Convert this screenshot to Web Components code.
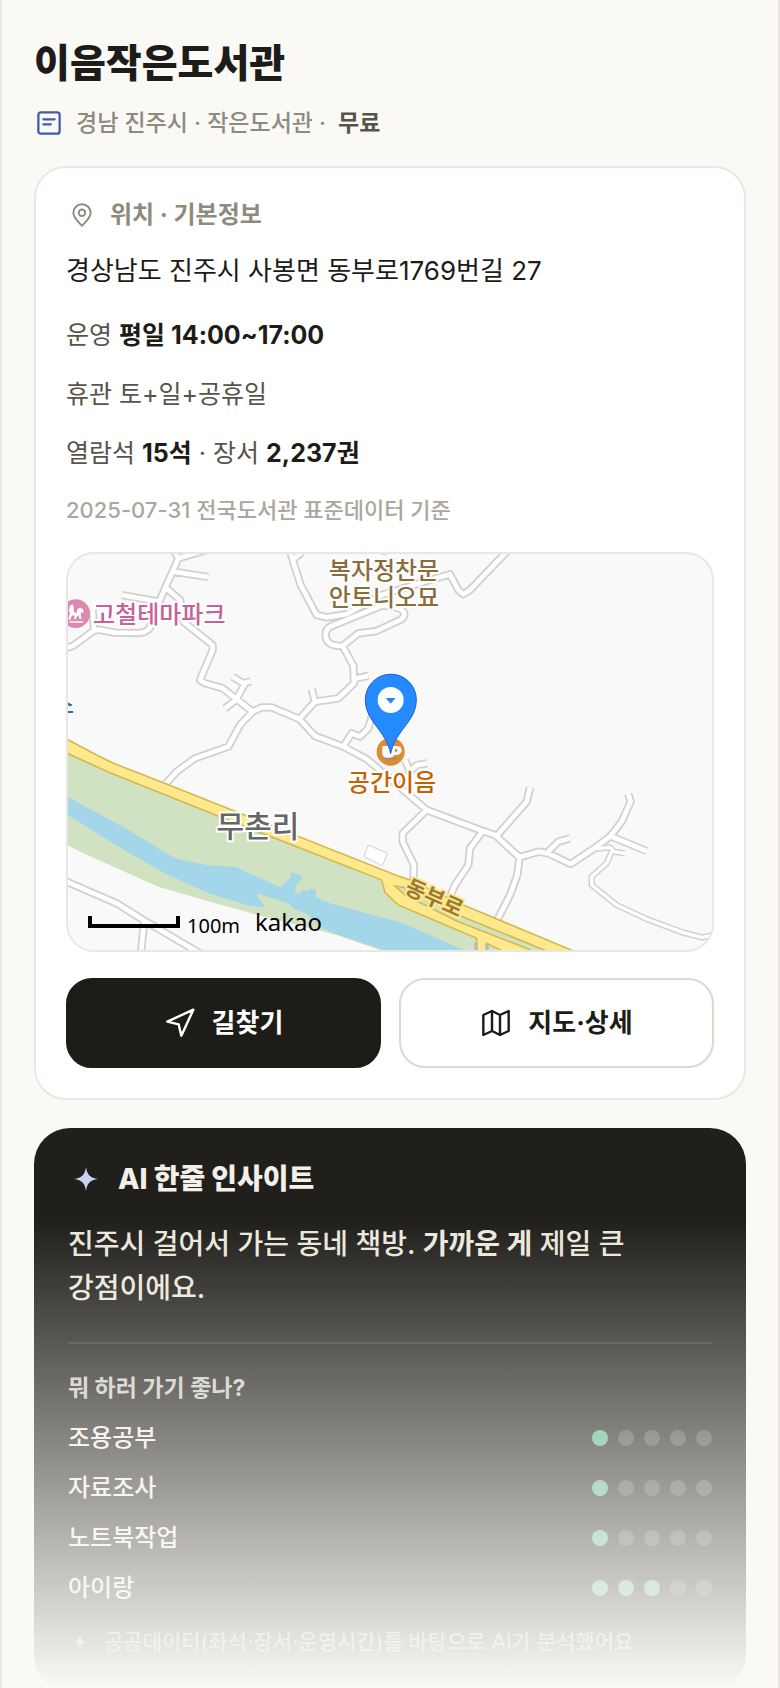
<!DOCTYPE html>
<html lang="ko">
<head>
<meta charset="utf-8">
<meta name="viewport" content="width=device-width, initial-scale=1">
<title>이음작은도서관</title>
<style>
    body {
        margin: 0;
        background: #faf9f5;
        color: #1d1c18;
        font-family: Inter, "Noto Sans CJK KR", sans-serif;
        font-weight: 500;
        word-break: keep-all;
    }
</style>
</head>
<body>

<library-page>
    <place-header slot="header" name="이음작은도서관" price="무료">경남 진주시 · 작은도서관 ·</place-header>

    <info-card>
        <span slot="title">위치 · 기본정보</span>
        <span slot="address">경상남도 진주시 사봉면 동부로1769번길 27</span>
        <info-line>운영 <b>평일 14:00~17:00</b></info-line>
        <info-line>휴관 토+일+공휴일</info-line>
        <info-line>열람석 <b>15석</b> · 장서 <b>2,237권</b></info-line>
        <info-line source>2025-07-31 전국도서관 표준데이터 기준</info-line>
        <area-map slot="map"></area-map>
        <action-button slot="actions" icon="send" primary>길찾기</action-button>
        <action-button slot="actions" icon="map">지도·상세</action-button>
    </info-card>

    <insight-card>
        <span slot="title">AI 한줄 인사이트</span>
        <span slot="summary">진주시 걸어서 가는 동네 책방. <b>가까운 게</b> 제일 큰 강점이에요.</span>
        <span slot="question">뭐 하러 가기 좋나?</span>
        <purpose-row score="1">조용공부</purpose-row>
        <purpose-row score="1">자료조사</purpose-row>
        <purpose-row score="1">노트북작업</purpose-row>
        <purpose-row score="3">아이랑</purpose-row>
        <span slot="note">공공데이터(좌석·장서·운영시간)를 바탕으로 AI가 분석했어요</span>
    </insight-card>
</library-page>

<script>
const ICONS = {
    note: '<rect x="3.5" y="3.5" width="17" height="17" rx="2"/><path d="M7.5 9h9M7.5 13h6"/>',
    pin: '<path d="M12 22C10 19.500 4 15 4 10a8 8 0 0 1 16 0c0 5-6 9.500-8 12z"/><circle cx="12" cy="10" r="3"/>',
    send: '<path d="M22 2 13 21.500 11 13 2.500 11z"/>',
    map: '<path d="M2.500 6 9 3l6 3 6.500-3v15L15 21l-6-3-6.500 3zM9 3v15M15 6v15"/>',
    spark: '<path fill="currentColor" stroke="none" d="M12 0c1.200 8 4 10.800 12 12-8 1.200-10.800 4-12 12-1.200-8-4-10.800-12-12 8-1.200 10.800-4 12-12z"/>'
};

function attach(element, html) {
    element.attachShadow({mode: "open"}).innerHTML = html;
}

class UiIcon extends HTMLElement {
    connectedCallback() {
        if (this.shadowRoot) return;
        attach(this, `
            <style>
            :host {
                display: flex;
                flex: none;
            }
            svg {
                width: 100%;
                height: 100%;
                fill: none;
                stroke: currentColor;
                stroke-width: 1.8;
                stroke-linecap: round;
                stroke-linejoin: round;
            }
            </style>
            <svg viewBox="0 0 24 24" aria-hidden="true">${ICONS[this.getAttribute("name")]}</svg>`);
    }
}

class LibraryPage extends HTMLElement {
    constructor() {
        super();
        attach(this, `
            <style>
            :host {
                display: block;
                position: relative;
                box-sizing: border-box;
                height: 100vh;
                overflow: hidden;
                padding: 39px 32px 0;
                border: solid #eae8e1;
                border-width: 0 2px;
            }
            main {
                display: flex;
                flex-direction: column;
                gap: 28px;
                margin-top: 27px;
            }
            /* fades the rest of the preview into the page */
            .fade {
                position: absolute;
                inset: auto -2px 0;
                height: 468px;
                background: linear-gradient(#faf9f500, #faf9f5);
                pointer-events: none;
            }
            </style>
            <slot name="header"></slot>
            <main><slot></slot></main>
            <div class="fade"></div>`);
    }
}

class PlaceHeader extends HTMLElement {
    connectedCallback() {
        if (this.shadowRoot) return;
        attach(this, `
            <style>
            :host {
                display: block;
            }
            h1 {
                margin: 0;
                font-size: 39px;
                line-height: 48px;
                font-weight: 800;
            }
            p {
                display: flex;
                align-items: center;
                gap: 12px;
                margin: 20px 0 0;
                font-size: 23px;
                line-height: 32px;
                color: #8e8a80;
            }
            ui-icon {
                width: 30px;
                height: 30px;
                color: #3f5bb0;
            }
            b {
                font-weight: 700;
                color: #57544c;
            }
            </style>
            <h1>${this.getAttribute("name")}</h1>
            <p><ui-icon name="note"></ui-icon><slot></slot><b>${this.getAttribute("price")}</b></p>`);
    }
}

class InfoCard extends HTMLElement {
    constructor() {
        super();
        attach(this, `
            <style>
            :host {
                display: block;
                padding: 30px;
                border: 2px solid #eae8e1;
                border-radius: 32px;
                background: #fff;
            }
            h2 {
                display: flex;
                align-items: center;
                gap: 12px;
                margin: 0;
                font-size: 24px;
                line-height: 34px;
                font-weight: 700;
                color: #8e8a80;
            }
            ui-icon {
                width: 32px;
                height: 26px;
            }
            .address {
                margin: 19px 0 24px;
                font-size: 26px;
                line-height: 40px;
                font-weight: 400;
            }
            .lines {
                display: flex;
                flex-direction: column;
                gap: 19px;
            }
            .map {
                margin: 24px 0 26px;
            }
            .actions {
                display: flex;
                gap: 18px;
            }
            </style>
            <h2><ui-icon name="pin"></ui-icon><slot name="title"></slot></h2>
            <p class="address"><slot name="address"></slot></p>
            <div class="lines"><slot></slot></div>
            <div class="map"><slot name="map"></slot></div>
            <div class="actions"><slot name="actions"></slot></div>`);
    }
}

class InfoLine extends HTMLElement {
    constructor() {
        super();
        attach(this, `
            <style>
            :host {
                display: block;
                font-size: 25px;
                line-height: 40px;
                font-weight: 400;
                color: #57544c;
            }
            :host([source]) {
                font-size: 22px;
                line-height: 36px;
                font-weight: 500;
                color: #aba79c;
            }
            ::slotted(b) {
                font-weight: 700;
                color: #1d1c18;
            }
            </style>
            <slot></slot>`);
    }
}

// centre lines of the side roads, drawn twice: grey casing, then white core
const ROADS = `
    M340 15 355 40 340 75 315 130 298 170 275 235Q270 262 235 264L165 263 115 254 100 258 40 302 15 310
    M355 40 440 15 M340 80 445 96 M185 150 295 170 M98 195 102 255
    M318 128 360 165 370 230 458 300 458 315 420 405 435 415 488 430 578 500
    M528 465 558 410 M518 395 550 415 572 409 M528 465 495 490
    M578 500 605 487 635 487 718 522 765 573 850 605 920 642 965 680 1100 795
    M578 500 540 540 505 605 405 640 350 680 318 715
    M718 522 765 470 835 460 882 415 880 362 848 303Q797 305 797 270Q797 250 815 243L965 182Q1035 185 1033 210Q1030 220 1020 225L950 258 895 265 848 303
    M882 402 925 392 M765 470 755 432
    M690 15 698 45 722 120 770 210 800 217 860 207 965 150 1110 105 1170 88 1195 135 1210 148 1230 135 1345 15 M698 45 725 22
    M850 605 875 565 900 575 925 550 938 505
    M1102 655 1070 660 1050 680 1035 645 M1050 680 1030 715
    M1100 795 1260 855 1305 870 1378 937 1435 920 1465 925 1532 957 1600 912 1650 875 1685 830 1712 770 1705 747
    M1650 873 1760 918 M1465 920 1495 890 1530 880 M1310 873 1400 770 1410 728
    M1100 795 1028 865 1028 890 1062 960 1060 1005
    M1265 863 1230 910 1225 960 1185 1020 1170 1055
    M1378 940 1372 990 1350 1050 1312 1125
    M15 1008 170 1075 250 1125 420 1225 M252 1130 243 1225`;
const LANES = `
    M1595 912 1650 907 1662 920 1695 925
    M1655 920 1640 955 1595 995 1595 1020 1670 1080 1760 1122 1870 1163 1925 1177 1965 1170`;

class AreaMap extends HTMLElement {
    constructor() {
        super();
        attach(this, `
            <style>
            :host {
                display: block;
                overflow: hidden;
                border: 2px solid #eae7e1;
                border-radius: 28px;
                background: #f9f9f9;
            }
            svg {
                display: block;
                width: 100%;
            }
            .casing {
                fill: none;
                stroke: #d1d1d1;
                stroke-width: 25;
            }
            .core {
                fill: none;
                stroke: #fff;
                stroke-width: 14;
            }
            .lane.casing {
                stroke-width: 19;
            }
            .lane.core {
                stroke-width: 10;
            }
            text {
                font-size: 24px;
                font-weight: 500;
                paint-order: stroke;
                stroke: #fff;
                stroke-width: 4px;
                stroke-linejoin: round;
            }
            .road {
                font-size: 22px;
                font-weight: 700;
                fill: #9c7a35;
                stroke: #ffe98c;
            }
            .village {
                font-size: 30px;
                fill: #666;
            }
            .distance, .brand {
                font-family: "Noto Sans", sans-serif;
                font-weight: 400;
                stroke: none;
            }
            .distance {
                font-size: 20px;
            }
            </style>
            <svg viewBox="0 0 644 396" role="img" aria-label="공간이음 주변 지도">
                <g transform="translate(-8 -9) scale(.33333)">
                    <path fill="#d1e2c2" d="M15 617 150 680 480 815 960 1005 1010 1080 1250 1180 1460 1230 980 1222 830 1170 600 1112 450 1070 295 1025 60 920 15 897z"/>
                    <path fill="#a4d6ea" d="M15 750 85 790 190 845 345 940 440 960 530 967 660 1027 690 1000 693 980 708 987 725 993 727 1000 708 1020 705 1043 722 1045 725 1035 745 1037 755 1030 768 1037 768 1057 810 1075 1030 1135 1225 1222 975 1217 820 1165 790 1150 735 1105 700 1090 685 1075 590 1045 593 1055 615 1085 600 1087 560 1080 445 1045 315 985 200 920 15 805z"/>
                    <g stroke-linejoin="round">
                        <path class="casing" d="${ROADS}"/>
                        <path class="lane casing" d="${LANES}"/>
                        <path class="core" d="${ROADS}"/>
                        <path class="lane core" d="${LANES}"/>
                    </g>
                    <path fill="#fff" stroke="#d1d1d1" stroke-width="3" d="M925 900 983 925 967 962 912 935z"/>
                    <path fill="#ffe98c" stroke="#d2bb4e" stroke-width="5" d="M10 577 110 630 160 655 310 713 540 805 1020 995 1050 1005 1210 1080 1550 1222 1335 1222 1280 1195 1280 1225 1250 1225 1250 1180 1015 1080 975 1043 965 1005 480 815 150 683 10 620z"/>
                    <path fill="#d1e2c2" stroke="#d2bb4e" stroke-width="5" d="M1005 1023 1045 1030 1200 1112 1460 1218 1420 1218 1190 1128 1035 1050z"/>
                    <path stroke="#b9b9b9" stroke-width="10" d="M1248 1192V1222M1281 1195V1222"/>
                    <path fill="none" stroke="#000" stroke-width="12" d="M90 1113v30h264v-30"/>

                    <circle cx="47" cy="206" r="43" fill="#dd88b1"/>
                    <path fill="#fff" d="M28 190l3-9 7-3 3 7 1 17 8 2 2-12 8-4 8 4 3 10-3 3-4-5-2 9 3 13h-6l-4-11-5 4-2 7h-6l2-9-7-2-5 8 1 5h-7l1-11 3-9-4-7zM29 229h40v4H29z"/>
                    <circle cx="972" cy="-12" r="41" fill="#dcc3a0"/>
                    <circle cx="992" cy="620" r="42" fill="#dc8c36"/>
                    <path fill="#fff" d="M967 603h36q22-2 22 13t-22 14q-6 10-19 10t-17-13zm38 9v10q8-1 8-6t-8-4z"/>
                    <path fill="#888" d="M974 638h35v5h-35z"/>
                    <path fill="#238bff" stroke="#1b62c9" stroke-width="3" d="M992 626C978 555 916 530 916 464a76 76 0 0 1 153 0C1069 530 1006 555 992 626z"/>
                    <circle cx="992" cy="465" r="39" fill="#fff"/>
                    <path fill="#238bff" d="M977 459h30l-15 17z"/>
                </g>
                <text x="25" y="69" fill="#c8609a">고철테마파크</text>
                <text x="6" y="159" text-anchor="end" fill="#2b6f86">스</text>
                <text x="316" y="25" text-anchor="middle" fill="#8a6d3b">복자정찬문</text>
                <text x="316" y="52" text-anchor="middle" fill="#8a6d3b">안토니오묘</text>
                <text x="324" y="237" text-anchor="middle" fill="#c56200">공간이음</text>
                <text class="village" x="190" y="283" text-anchor="middle">무촌리</text>
                <text class="road" x="367" y="352" text-anchor="middle" transform="rotate(24 367 343)">동부로</text>
                <text class="distance" x="119" y="379">100m</text>
                <text class="brand" x="187" y="377">kakao</text>
            </svg>`);
    }
}

class ActionButton extends HTMLElement {
    connectedCallback() {
        if (this.shadowRoot) return;
        attach(this, `
            <style>
            :host {
                display: block;
                flex: 1;
            }
            button {
                display: flex;
                align-items: center;
                justify-content: center;
                gap: 16px;
                width: 100%;
                height: 90px;
                padding: 0;
                border: 2px solid #dcd9d0;
                border-radius: 26px;
                background: #fff;
                color: #1d1c18;
                font: inherit;
                font-size: 26px;
                line-height: 34px;
                font-weight: 700;
                cursor: pointer;
            }
            :host([primary]) button {
                border-color: #1d1c18;
                background: #1d1c18;
                color: #fff;
            }
            ui-icon {
                width: 32px;
                height: 32px;
            }
            </style>
            <button type="button"><ui-icon name="${this.getAttribute("icon")}"></ui-icon><slot></slot></button>`);
    }
}

class InsightCard extends HTMLElement {
    constructor() {
        super();
        attach(this, `
            <style>
            :host {
                display: block;
                padding: 34px;
                border-radius: 36px;
                background: #201f1b;
                color: #f3f0e9;
            }
            h2, h3, p {
                margin: 0;
            }
            h2 {
                display: flex;
                align-items: center;
                gap: 14px;
                font-size: 28px;
                line-height: 34px;
                font-weight: 800;
            }
            h2 ui-icon {
                width: 36px;
                height: 24px;
                color: #c6d2f0;
            }
            .summary {
                margin-top: 26px;
                padding-bottom: 32px;
                border-bottom: 2px solid #ffffff1a;
                font-size: 28px;
                line-height: 44px;
                color: #ebe7dd;
            }
            h3 {
                margin-top: 29px;
                font-size: 23px;
                line-height: 30px;
                font-weight: 700;
                color: #cdcac0;
            }
            .rows {
                display: flex;
                flex-direction: column;
                gap: 16px;
                margin-top: 18px;
            }
            .note {
                display: flex;
                align-items: center;
                gap: 12px;
                margin-top: 22px;
                font-size: 21px;
                line-height: 30px;
                color: #aaa79e;
            }
            .note ui-icon {
                width: 24px;
                height: 16px;
            }
            </style>
            <h2><ui-icon name="spark"></ui-icon><slot name="title"></slot></h2>
            <p class="summary"><slot name="summary"></slot></p>
            <h3><slot name="question"></slot></h3>
            <div class="rows"><slot></slot></div>
            <p class="note"><ui-icon name="spark"></ui-icon><slot name="note"></slot></p>`);
    }
}

class PurposeRow extends HTMLElement {
    connectedCallback() {
        if (this.shadowRoot) return;
        const score = Number(this.getAttribute("score"));
        let dots = "";
        for (let i = 0; i < 5; i++) {
            dots += `<i class="${i < score ? "on" : ""}"></i>`;
        }
        attach(this, `
            <style>
            :host {
                display: flex;
                align-items: center;
                justify-content: space-between;
                font-size: 24px;
                line-height: 34px;
                font-weight: 500;
            }
            .dots {
                display: flex;
                gap: 10px;
            }
            i {
                width: 16px;
                height: 16px;
                border-radius: 50%;
                background: #ffffff2e;
            }
            .on {
                background: #5bb78c;
            }
            </style>
            <slot></slot>
            <div class="dots" role="img" aria-label="5점 중 ${score}점">${dots}</div>`);
    }
}

customElements.define("ui-icon", UiIcon);
customElements.define("library-page", LibraryPage);
customElements.define("place-header", PlaceHeader);
customElements.define("info-card", InfoCard);
customElements.define("info-line", InfoLine);
customElements.define("area-map", AreaMap);
customElements.define("action-button", ActionButton);
customElements.define("insight-card", InsightCard);
customElements.define("purpose-row", PurposeRow);
</script>
</body>
</html>
